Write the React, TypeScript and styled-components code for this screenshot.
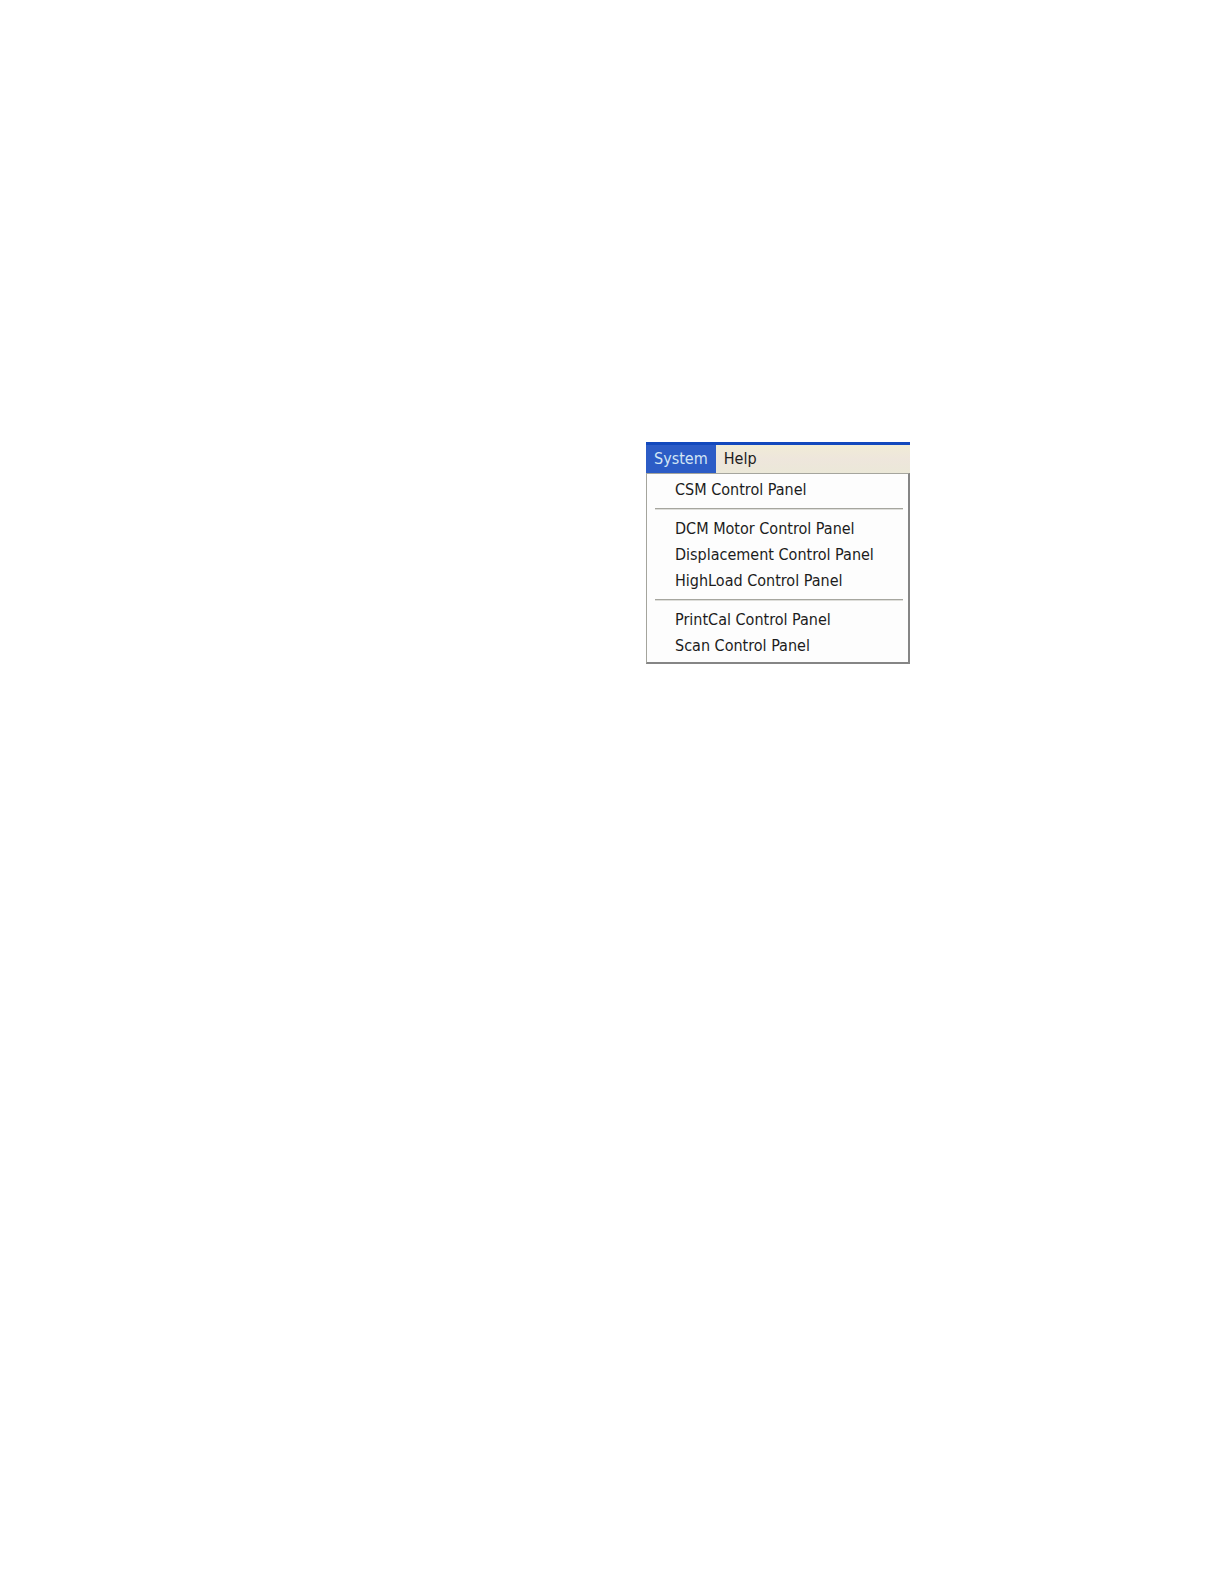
import { useState } from "react";
import styled, { createGlobalStyle } from "styled-components";

const GlobalStyle = createGlobalStyle`
  body {
    margin: 0;
    background: #fff;
  }
`;

const Page = styled.main`
  display: flex;
  justify-content: flex-end;
  align-items: flex-start;
  min-height: 100vh;
  box-sizing: border-box;
  padding: 442px 314px 0 0;
  font-family: "DejaVu Sans Condensed", "DejaVu Sans", sans-serif;
  font-size: 16px;
  color: #1c1c1c;
`;

const MenuWindow = styled.div`
  width: 264px;
`;

const MenuBar = styled.nav`
  display: flex;
  height: 28px;
  border-top: 3px solid #1249bd;
  background: linear-gradient(#f0ecd6, #eee6dc 50%, #ebe8d8);
`;

const MenuBarButton = styled.button<{ $active: boolean }>`
  border: 0;
  padding: 0 8px;
  font: inherit;
  line-height: 26px;
  background: ${({ $active }) => ($active ? "#2c5cc6" : "transparent")};
  color: ${({ $active }) => ($active ? "#d3e6f5" : "#1c1c1c")};
`;

const Dropdown = styled.div`
  padding: 3px 0;
  border: 1px solid #a5a59d;
  border-width: 1px 2px 2px 1px;
  border-right-color: #858585;
  border-bottom-color: #858585;
  background: #fdfdfd;
`;

const MenuItem = styled.button`
  display: block;
  width: 100%;
  height: 26px;
  border: 0;
  padding: 0 0 0 28px;
  background: transparent;
  color: inherit;
  font: inherit;
  line-height: 26px;
  text-align: left;
  white-space: nowrap;
`;

const Separator = styled.hr`
  height: 1px;
  margin: 5px 5px 6px 8px;
  border: 0;
  border-top: 1px solid #a6a69f;
  background: #dededa;
`;

const groups = [
  ["CSM Control Panel"],
  ["DCM Motor Control Panel", "Displacement Control Panel", "HighLoad Control Panel"],
  ["PrintCal Control Panel", "Scan Control Panel"],
];

export default function App() {
  const [open, setOpen] = useState(true);

  return (
    <Page>
      <GlobalStyle />
      <MenuWindow>
        <MenuBar>
          <MenuBarButton $active={open} aria-expanded={open} onClick={() => setOpen(!open)}>
            System
          </MenuBarButton>
          <MenuBarButton $active={false}>Help</MenuBarButton>
        </MenuBar>
        {open && (
          <Dropdown role="menu">
            {groups.map((items, index) => (
              <div key={index}>
                {index > 0 && <Separator />}
                {items.map((item) => (
                  <MenuItem key={item} role="menuitem">
                    {item}
                  </MenuItem>
                ))}
              </div>
            ))}
          </Dropdown>
        )}
      </MenuWindow>
    </Page>
  );
}
